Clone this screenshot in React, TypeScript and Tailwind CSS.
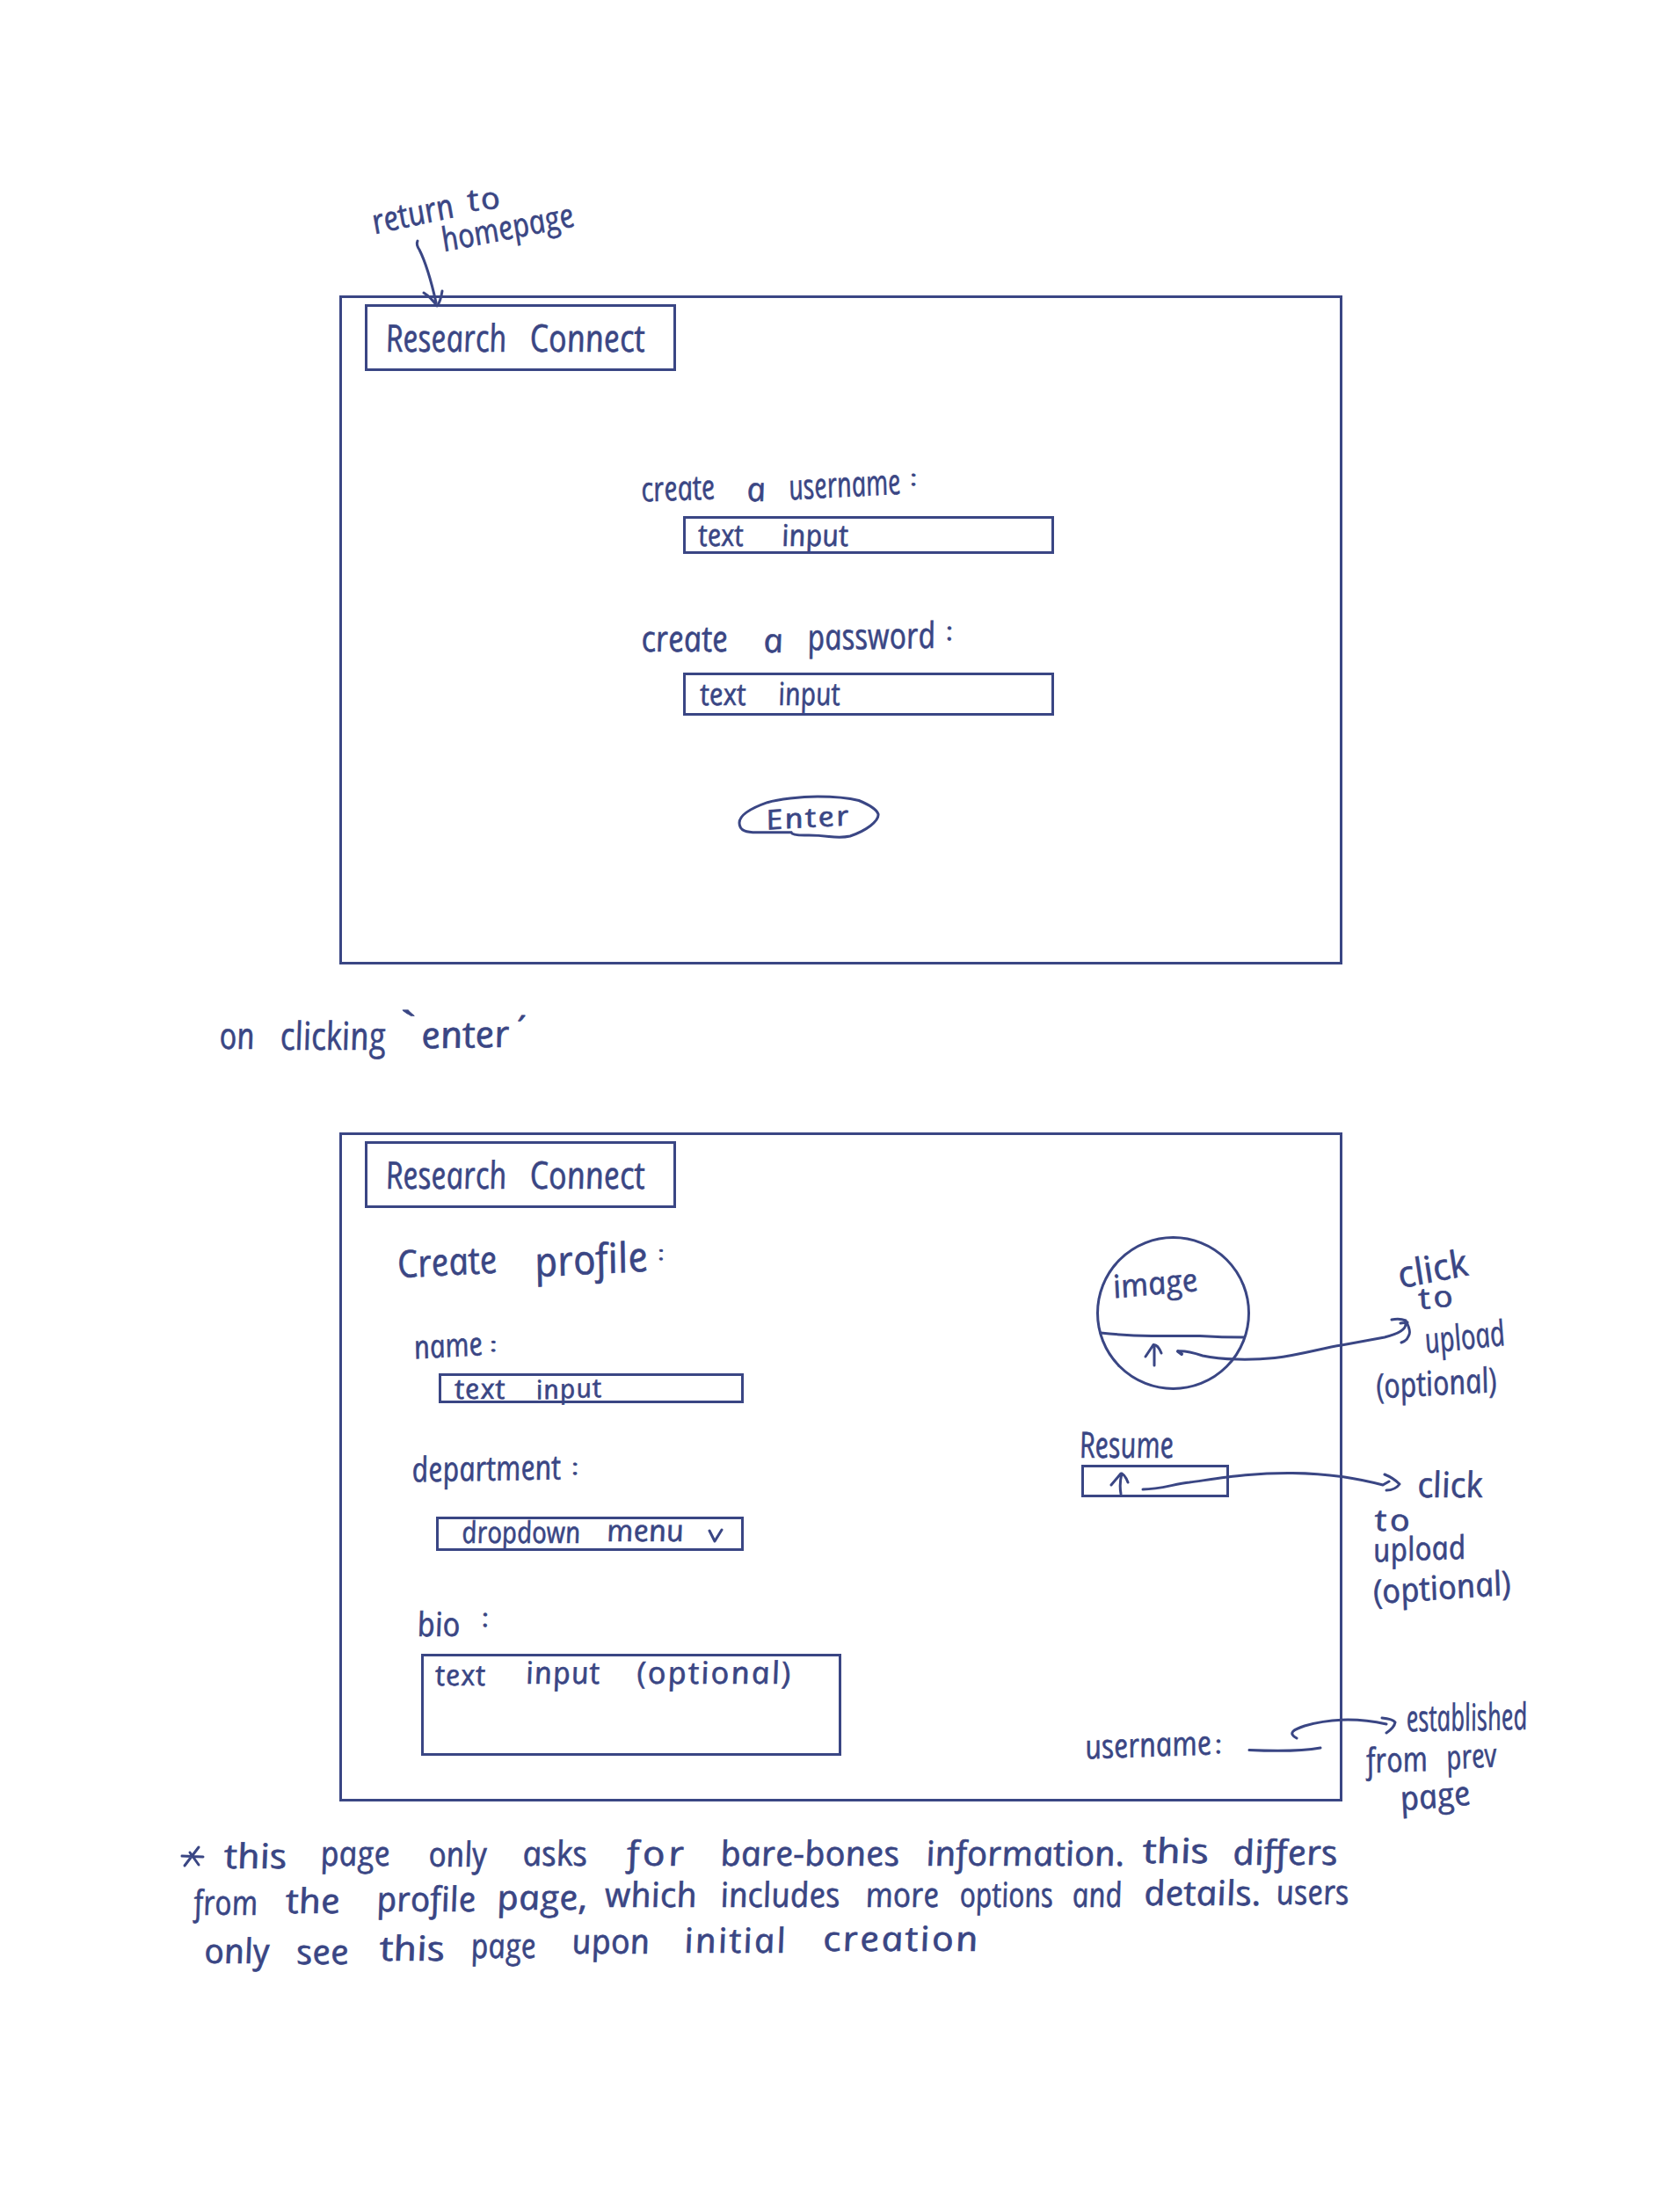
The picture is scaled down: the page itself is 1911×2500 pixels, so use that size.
import { useLayoutEffect, useRef, useState } from "react";
import clsx from "clsx";

/* One pen-written word: the text is stretched to the width of its slot. */
function Word({ children, className }: { children: string; className: string }) {
  const slot = useRef<HTMLSpanElement>(null);
  const ink = useRef<HTMLSpanElement>(null);
  const [scale, setScale] = useState(1);
  useLayoutEffect(() => {
    if (slot.current && ink.current) {
      setScale(slot.current.offsetWidth / ink.current.offsetWidth);
    }
  }, []);
  return (
    <span ref={slot} className={clsx("block h-10 shrink-0 origin-[0_34px] whitespace-nowrap leading-10", className)}>
      <span
        ref={ink}
        className="inline-block origin-[0_34px] align-top [-webkit-text-stroke:0.6px_#3a4684]"
        style={{ transform: `translate(2px, 1.5px) scaleX(${scale}) skewX(10deg)` }}
      >
        {children}
      </span>
    </span>
  );
}

function Row({ children, className }: { children: React.ReactNode; className?: string }) {
  return <div className={clsx("flex h-10 items-start", className)}>{children}</div>;
}

const BOX = "flex items-start border-3 border-[#3a4684]";

function Brand() {
  return (
    <div className={clsx(BOX, "ml-[26px] mt-[7px] h-[76px] w-[354px]")}>
      <Word className="ml-[20px] mt-[13px] w-[138px] text-[43px]">Research</Word>
      <Word className="ml-[26px] mt-[13px] w-[131px] text-[43px]">Connect</Word>
    </div>
  );
}

function SignUpFrame() {
  return (
    <section className="ml-[386px] h-[761px] w-[1141px] border-3 border-[#3a4684]">
      <Brand />
      <Row className="mt-[111px]">
        <Word className="ml-[340px] mt-[1px] w-[84px] -rotate-2 text-[39px]">create</Word>
        <Word className="ml-[36px] w-[22px] text-[38px]">a</Word>
        <Word className="ml-[26px] -mt-[1px] w-[127px] -rotate-3 text-[40px]">username</Word>
        <Word className="ml-[12px] -mt-[12px] w-[8px] text-[24px]">:</Word>
      </Row>
      <div className={clsx(BOX, "ml-[388px] mt-[14px] h-[43px] w-[422px]")}>
        <Word className="ml-[14px] -mt-[4px] w-[51px] text-[35px]">text</Word>
        <Word className="ml-[44px] -mt-[4px] w-[76px] text-[34px]">input</Word>
      </div>
      <Row className="mt-[71px]">
        <Word className="ml-[340px] mt-[2px] w-[98px] text-[41px]">create</Word>
        <Word className="ml-[41px] mt-[4px] w-[23px] text-[38px]">a</Word>
        <Word className="ml-[27px] mt-[1px] w-[146px] -rotate-1 text-[41px]">password</Word>
        <Word className="ml-[12px] -mt-[6px] w-[8px] text-[28px]">:</Word>
      </Row>
      <div className={clsx(BOX, "ml-[388px] mt-[24px] h-[49px] w-[422px]")}>
        <Word className="ml-[16px] -mt-[1px] w-[52px] text-[35px]">text</Word>
        <Word className="ml-[37px] -mt-[1px] w-[70px] text-[36px]">input</Word>
      </div>
      <button className="relative ml-[450px] mt-[90px] flex h-[50px] w-[162px] items-start">
        <svg className="absolute inset-0" width="162" height="50" fill="none" stroke="currentColor" strokeWidth="3" strokeLinecap="round">
          <path d="M61 42.7H24C10 43 2 41 2 32C2 23 16 15 34 8.7C46 5 72 2 91 2C112 2 128 4 138 6.5C144 9 158 15 160 22C161 30 146 41 128 47C110 51 104 45 76 46C68 46 62 45.5 61 42.7Z" />
        </svg>
        <Word className="ml-[33px] mt-[6px] w-[97px] -rotate-3 text-left text-[31px] tracking-[2px]">Enter</Word>
      </button>
    </section>
  );
}

function ProfileForm() {
  return (
    <div className="w-[800px]">
      <Brand />
      <Row className="mt-[38px]">
        <Word className="ml-[63px] mt-[4px] w-[114px] -rotate-3 text-[43px]">Create</Word>
        <Word className="ml-[42px] mt-[1px] w-[129px] -rotate-3 text-[47px]">profile</Word>
        <Word className="ml-[12px] -mt-[10px] w-[8px] text-[22px]">:</Word>
      </Row>
      <Row className="mt-[56px]">
        <Word className="ml-[82px] mt-[2px] w-[78px] -rotate-3 text-[37px]">name</Word>
        <Word className="ml-[9px] -mt-[2px] w-[9px] text-[22px]">:</Word>
      </Row>
      <div className={clsx(BOX, "ml-[110px] mt-[14px] h-[34px] w-[347px]")}>
        <Word className="ml-[15px] -mt-[8px] w-[58px] text-[32px] tracking-[1px]">text</Word>
        <Word className="ml-[35px] -mt-[6px] w-[75px] -rotate-2 text-[30px] tracking-[1px]">input</Word>
      </div>
      <Row className="mt-[53px]">
        <Word className="ml-[79px] w-[170px] -rotate-1 text-[39px]">department</Word>
        <Word className="ml-[13px] -mt-[3px] w-[8px] text-[24px]">:</Word>
      </Row>
      <div className={clsx(BOX, "ml-[107px] mt-[36px] h-[39px] w-[350px]")}>
        <Word className="ml-[26px] -mt-[8px] w-[135px] text-[34px]">dropdown</Word>
        <Word className="ml-[30px] -mt-[10px] w-[88px] text-[34px]">menu</Word>
        <svg className="ml-[27px] mt-[10px]" width="18" height="17" fill="none" stroke="currentColor" strokeWidth="3" strokeLinecap="round" strokeLinejoin="round">
          <path d="M2 3L8 15L16 2" />
        </svg>
      </div>
      <Row className="mt-[60px]">
        <Word className="ml-[85px] w-[49px] text-[38px]">bio</Word>
        <Word className="ml-[25px] -mt-[7px] w-[8px] text-[28px]">:</Word>
      </Row>
      <div className={clsx(BOX, "ml-[90px] mt-[17px] h-[116px] w-[478px]")}>
        <Word className="ml-[13px] -mt-[1px] w-[58px] text-[33px] tracking-[1px]">text</Word>
        <Word className="ml-[45px] -mt-[4px] w-[85px] text-[35px] tracking-[1px]">input</Word>
        <Word className="ml-[41px] -mt-[4px] w-[178px] text-[35px] tracking-[2px]">(optional)</Word>
      </div>
    </div>
  );
}

function UploadColumn() {
  return (
    <div className="flex-1">
      <div className="relative ml-[58px] mt-[115px] flex h-[175px] w-[175px] items-start rounded-full border-3 border-[#3a4684]">
        <Word className="ml-[17px] mt-[33px] w-[96px] -rotate-5 text-[36px]">image</Word>
        <svg className="absolute left-0 top-0" width="169" height="169" fill="none" stroke="currentColor" strokeWidth="3" strokeLinecap="round" strokeLinejoin="round">
          <path d="M2 107Q30 110 60 110.500H115Q140 112 165 112" />
          <path d="M63 144V121M53 134L62 120.500Q67 120 71 130" />
        </svg>
      </div>
      <Row className="mt-[39px]">
        <Word className="ml-[38px] w-[107px] text-[41px]">Resume</Word>
      </Row>
      <div className={clsx(BOX, "ml-[41px] mt-[6px] h-[37px] w-[168px]")}>
        <svg className="ml-[29px] mt-[4px]" width="24" height="28" fill="none" stroke="currentColor" strokeWidth="3" strokeLinecap="round" strokeLinejoin="round">
          <path d="M13 26Q11 15 14 3M2 16L13 3Q17 3 21 13" />
        </svg>
      </div>
      <Row className="mt-[260px]">
        <Word className="ml-[45px] mt-[1px] w-[144px] -rotate-2 text-[38px]">username</Word>
        <Word className="ml-[4px] -mt-[2px] w-[8px] text-[28px]">:</Word>
        <svg className="ml-[28px] mt-[20px]" width="88" height="12" fill="none" stroke="currentColor" strokeWidth="3" strokeLinecap="round">
          <path d="M3 7.500Q56 10 84 5" />
        </svg>
      </Row>
    </div>
  );
}

function MarginNotes() {
  return (
    <aside className="pt-[139px]">
      <Row>
        <Word className="ml-[65px] mt-[1px] w-[80px] -rotate-[11deg] text-[42px]">click</Word>
      </Row>
      <Row className="-mt-[15px]">
        <Word className="ml-[88px] mt-[3px] w-[42px] -rotate-6 text-[34px] tracking-[3px]">to</Word>
      </Row>
      <Row className="mt-[10px]">
        <Word className="ml-[94px] mt-[1px] w-[92px] -rotate-6 text-[40px]">upload</Word>
      </Row>
      <Row className="mt-[10px]">
        <Word className="ml-[38px] mt-[2px] w-[138px] -rotate-3 text-[39px]">(optional)</Word>
      </Row>
      <Row className="mt-[74px]">
        <Word className="ml-[85px] w-[74px] text-[40px]">click</Word>
      </Row>
      <Row className="-mt-[2px]">
        <Word className="ml-[37px] mt-[2px] w-[43px] text-[34px] tracking-[3px]">to</Word>
      </Row>
      <Row className="-mt-[4px]">
        <Word className="ml-[35px] mt-[1px] w-[105px] -rotate-2 text-[37px]">upload</Word>
      </Row>
      <Row className="mt-[6px]">
        <Word className="ml-[35px] mt-[2px] w-[157px] -rotate-4 text-[38px]">(optional)</Word>
      </Row>
      <Row className="mt-[106px]">
        <Word className="ml-[72px] w-[138px] -rotate-1 text-[42px]">established</Word>
      </Row>
      <Row className="mt-[8px]">
        <Word className="ml-[27px] w-[70px] -rotate-2 text-[39px]">from</Word>
        <Word className="ml-[21px] -mt-[4px] w-[57px] -rotate-3 text-[38px]">prev</Word>
      </Row>
      <Row className="mt-[2px]">
        <Word className="ml-[66px] mt-[1px] w-[80px] -rotate-5 text-[38px]">page</Word>
      </Row>
    </aside>
  );
}

function Footnote() {
  return (
    <footer className="pt-[37px] text-[39px]">
      <Row>
        <svg className="ml-[205px] mt-[12px]" width="30" height="28" fill="none" stroke="currentColor" strokeWidth="3" strokeLinecap="round" strokeLinejoin="round">
          <path d="M2 13L26 14M21 3L5 24M11 9L21 23" />
        </svg>
        <Word className="ml-[20px] mt-[2px] w-[71px]">this</Word>
        <Word className="ml-[38px] -mt-[1px] w-[79px]">page</Word>
        <Word className="ml-[44px] w-[66px]">only</Word>
        <Word className="ml-[41px] -mt-[1px] w-[74px]">asks</Word>
        <Word className="ml-[45px] -mt-[1px] w-[69px] tracking-[3px]">for</Word>
        <Word className="ml-[37px] -mt-[1px] w-[204px]">bare-bones</Word>
        <Word className="ml-[30px] -mt-[1px] w-[226px]">information.</Word>
        <Word className="ml-[21px] -mt-[4px] w-[75px]">this</Word>
        <Word className="ml-[27px] -mt-[2px] w-[119px]">differs</Word>
      </Row>
      <Row className="mt-[15px]">
        <Word className="ml-[220px] w-[73px]">from</Word>
        <Word className="ml-[32px] -mt-[2px] w-[62px]">the</Word>
        <Word className="ml-[41px] -mt-[4px] w-[113px]">profile</Word>
        <Word className="ml-[24px] -mt-[6px] w-[103px]">page,</Word>
        <Word className="ml-[20px] -mt-[9px] w-[104px]">which</Word>
        <Word className="ml-[27px] -mt-[9px] w-[136px]">includes</Word>
        <Word className="ml-[29px] -mt-[9px] w-[84px]">more</Word>
        <Word className="ml-[23px] -mt-[9px] w-[106px]">options</Word>
        <Word className="ml-[22px] -mt-[9px] w-[57px]">and</Word>
        <Word className="ml-[25px] -mt-[11px] w-[133px]">details.</Word>
        <Word className="ml-[17px] -mt-[12px] w-[83px]">users</Word>
      </Row>
      <Row className="mt-[15px]">
        <Word className="ml-[232px] w-[74px]">only</Word>
        <Word className="ml-[31px] mt-[1px] w-[60px]">see</Word>
        <Word className="ml-[35px] -mt-[3px] w-[74px]">this</Word>
        <Word className="ml-[29px] -mt-[6px] w-[74px]">page</Word>
        <Word className="ml-[41px] -mt-[11px] w-[88px]">upon</Word>
        <Word className="ml-[40px] -mt-[12px] w-[118px] tracking-[2px]">initial</Word>
        <Word className="ml-[40px] -mt-[14px] w-[179px] tracking-[2px]">creation</Word>
      </Row>
    </footer>
  );
}

/* Pen arrows that cross the frames' borders. */
function Arrows() {
  return (
    <svg className="pointer-events-none absolute left-0 top-0" width="1911" height="2500" fill="none" stroke="currentColor" strokeWidth="3" strokeLinecap="round" strokeLinejoin="round">
      <path d="M475 274Q473 278 477 284Q487 304 496 344M482 333Q490 338 497 348Q501 344 503 331" />
      <path d="M1340 1537Q1349 1536 1368 1542C1390 1547 1425 1547 1450 1544.500C1480 1541 1505 1533 1526 1530L1575 1521Q1600 1515 1599 1505" />
      <path d="M1340 1537L1344 1540" strokeWidth="4" />
      <path d="M1583 1501Q1592 1499 1599 1502Q1606 1515 1602 1520Q1600 1525 1594 1527M1593 1505L1601 1504" />
      <path d="M1300 1694C1320 1694 1335 1688 1353 1686C1390 1681 1425 1675 1470 1675.500C1515 1676 1545 1682 1573 1689L1580 1685M1575 1677Q1585 1681 1592 1688Q1587 1695 1577 1695" />
      <path d="M1475 1977C1464 1971 1472 1967 1484 1963C1515 1954 1545 1954 1577 1961M1572 1954Q1584 1955 1587 1959Q1586 1965 1577 1971" />
    </svg>
  );
}

export default function App() {
  return (
    <main className="relative h-[2500px] w-[1911px] overflow-hidden bg-white font-['Open_Sans',sans-serif] italic text-[#3a4684]">
      <div className="h-[336px] pt-[229px]">
        <Row>
          <Word className="ml-[425px] mt-[1px] w-[94px] -rotate-12 text-[39px]">return</Word>
          <Word className="ml-[14px] -mt-[23px] w-[39px] -rotate-6 text-[35px] tracking-[2px]">to</Word>
        </Row>
        <Row className="-mt-[20px]">
          <Word className="ml-[504px] mt-[1px] w-[152px] -rotate-[11deg] text-[38px]">homepage</Word>
        </Row>
      </div>
      <SignUpFrame />
      <div className="h-[191px] pt-[58px]">
        <Row>
          <Word className="ml-[249px] w-[40px] text-[42px]">on</Word>
          <Word className="ml-[29px] w-[120px] text-[44px]">clicking</Word>
          <Word className="ml-[17px] -mt-[12px] w-[18px] text-[42px]">`</Word>
          <Word className="ml-[6px] w-[100px] -rotate-1 text-[42px]">enter</Word>
          <Word className="ml-[8px] -mt-[6px] w-[18px] text-[42px]">´</Word>
        </Row>
      </div>
      <div className="flex h-[761px]">
        <section className="ml-[386px] flex w-[1141px] border-3 border-[#3a4684]">
          <ProfileForm />
          <UploadColumn />
        </section>
        <MarginNotes />
      </div>
      <Footnote />
      <Arrows />
    </main>
  );
}
